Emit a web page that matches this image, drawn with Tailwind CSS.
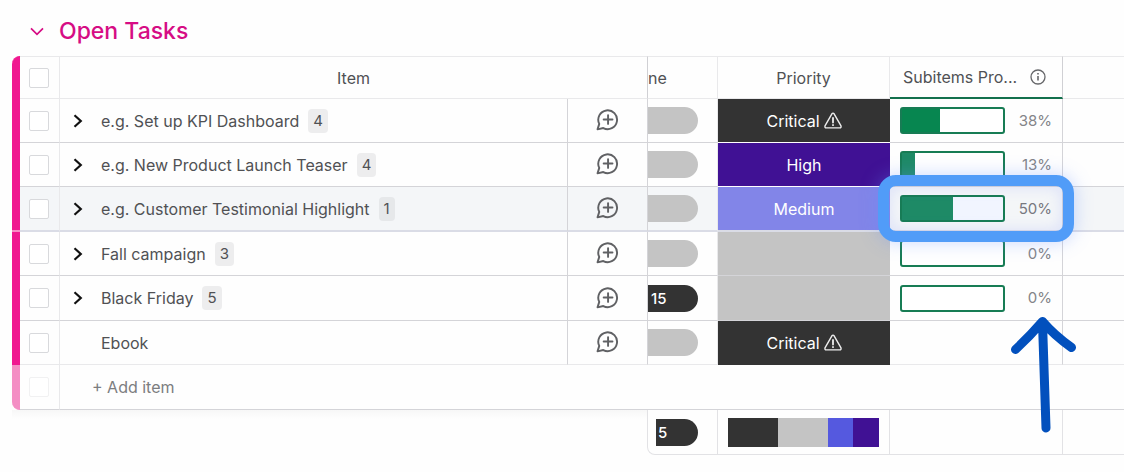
<!DOCTYPE html>
<html lang="en">
<head>
<meta charset="utf-8">
<title>Open Tasks</title>
<script src="https://cdn.jsdelivr.net/npm/@tailwindcss/browser@4"></script>
</head>
<body class="bg-[#fefefe] text-[#505154] text-base leading-6 font-['Inter',sans-serif] overflow-x-hidden">
<svg class="hidden">
  <symbol id="chat" viewBox="0 0 24 24" fill="none" stroke="#606164" stroke-width="2" stroke-linecap="round" stroke-linejoin="round">
    <path d="M1.6 22.3 L3.4 16.6 A9.8 9.8 0 1 1 7.6 20.9 Z"/><path d="M12.6 7.4v9.2M8 12h9.2"/>
  </symbol>
  <symbol id="chev" viewBox="0 0 10 14" fill="none" stroke="#111" stroke-width="2.2"><path d="M1.500 1.200 L7.800 7 L1.500 12.800"/></symbol>
  <symbol id="warn" viewBox="0 0 18 17" fill="none" stroke="#eee" stroke-width="1.4" stroke-linecap="round" stroke-linejoin="round">
    <path d="M7.900 1.800 Q9 .4 10.100 1.800 L17 13.800 Q17.400 15.800 15.800 15.900 H2.200 Q.6 15.800 1 13.800 Z"/><path d="M9 6v4.600M9 13v.2" stroke-width="1.8"/>
  </symbol>
</svg>
<h1 class="flex items-center gap-[15px] h-[56px] pt-[6px] pl-[30px] text-[#d60c84]">
  <button aria-label="Collapse group"><svg class="w-[14px] h-[9px]" viewBox="0 0 14 9" fill="none" stroke="currentColor" stroke-width="1.7"><path d="M1 1.300 L7 7.300 L13 1.300"/></svg></button>
  <span class="text-[23px] leading-7 font-medium">Open Tasks</span>
</h1>
<main class="pl-3">
<table class="w-full table-fixed border-separate border-spacing-0 [&_td]:p-0 [&_th]:p-0 [&_th]:font-normal">
  <colgroup><col class="w-[8px]"><col class="w-[40px]"><col><col class="w-[80px]"><col class="w-[71px]"><col class="w-[172px]"><col class="w-[173px]"><col class="w-[61px]"></colgroup>
  <thead>
    <tr class="h-[43px] [&>th]:border-t [&>th]:border-[#e9e9eb]">
      <th class="bg-[#f01890] rounded-tl-lg border-t-[#f01890]!"></th>
      <th class="border-r border-b"><input type="checkbox" aria-label="Select all" class="block ml-[9px] appearance-none size-5 border border-[#d8d9dc] rounded-xs bg-white"></th>
      <th class="border-b" colspan="2">Item</th>
      <th class="border-b border-l border-l-[#d0d0d4]! border-r text-left">ne</th>
      <th class="border-b border-r">Priority</th>
      <th class="border-b-2 border-b-[#13704d]! border-r border-r-[#d0d0d4]!"><div class="flex items-center justify-between pl-[13px] pr-4"><span>Subitems Pro...</span>
        <button aria-label="Column info"><svg class="block size-4" viewBox="0 0 16 16" fill="none" stroke="#66676a" stroke-width="1.3"><circle cx="8" cy="8" r="7"/><path d="M8 7v4.500M8 4v1.500" stroke-width="1.6"/></svg></button></div></th>
      <th class="border-b"></th>
    </tr>
  </thead>
  <tbody class="[&_td]:border-[#d4d4d8]">
    <tr class="h-[44px] [&>td]:border-b">
      <td class="bg-[#f01890] border-[#f01890]!"></td>
      <td class="border-r border-r-[#e9e9eb]!"><input type="checkbox" aria-label="Select Set up KPI Dashboard" class="block ml-[9px] appearance-none size-5 border border-[#d8d9dc] rounded-xs bg-white"></td>
      <td><div class="flex items-center pl-[13px]"><button aria-label="Expand" class="w-[28px]"><svg class="w-[10px] h-[14px]"><use href="#chev"/></svg></button><span>e.g. Set up KPI Dashboard</span><span class="ml-[9px] px-[5px] rounded bg-[#ededee] text-[15px]">4</span></div></td>
      <td class="border-l"><button aria-label="Add update" class="block mx-auto pb-[2px]"><svg class="block size-[23px]"><use href="#chat"/></svg></button></td>
      <td class="border-l border-r border-r-[#e9e9eb]!"><div class="w-[50px] h-[27px] rounded-r-full bg-[#c4c4c4]"></div></td>
      <td class="bg-[#333] text-white border-b-white!"><div class="flex items-center justify-center gap-1"><span>Critical</span><svg class="w-[18px] h-[17px]"><use href="#warn"/></svg></div></td>
      <td class="border-r"><div class="flex items-center justify-between px-[10px]"><div class="w-[105px] h-[27px] border-2 border-[#177c54] rounded-[3px] bg-white"><div class="h-full bg-[#078650]" style="width:38%"></div></div><span class="text-[15px] text-[#838488]">38%</span></div></td>
      <td></td>
    </tr>
    <tr class="h-[44px] [&>td]:border-b">
      <td class="bg-[#f01890] border-[#f01890]!"></td>
      <td class="border-r border-r-[#e9e9eb]!"><input type="checkbox" aria-label="Select New Product Launch Teaser" class="block ml-[9px] appearance-none size-5 border border-[#d8d9dc] rounded-xs bg-white"></td>
      <td><div class="flex items-center pl-[13px]"><button aria-label="Expand" class="w-[28px]"><svg class="w-[10px] h-[14px]"><use href="#chev"/></svg></button><span>e.g. New Product Launch Teaser</span><span class="ml-[9px] px-[5px] rounded bg-[#ededee] text-[15px]">4</span></div></td>
      <td class="border-l"><button aria-label="Add update" class="block mx-auto pb-[2px]"><svg class="block size-[23px]"><use href="#chat"/></svg></button></td>
      <td class="border-l border-r border-r-[#e9e9eb]!"><div class="w-[50px] h-[27px] rounded-r-full bg-[#c4c4c4]"></div></td>
      <td class="bg-[#401194] text-white text-center border-b-white!">High</td>
      <td class="border-r"><div class="flex items-center justify-between px-[10px]"><div class="w-[105px] h-[27px] border-2 border-[#177c54] rounded-[3px] bg-white"><div class="h-full bg-[#1e8a66]" style="width:13%"></div></div><span class="text-[15px] text-[#838488]">13%</span></div></td>
      <td></td>
    </tr>
    <tr class="h-[45px] bg-[#f4f6f8] [&>td]:border-b-2 [&>td]:border-b-[#dadce6]">
      <td class="bg-[#f01890] border-b-[#f78cc5]!"></td>
      <td class="border-r border-r-[#e9e9eb]!"><input type="checkbox" aria-label="Select Customer Testimonial Highlight" class="block ml-[9px] appearance-none size-5 border border-[#d8d9dc] rounded-xs bg-white"></td>
      <td><div class="flex items-center pl-[13px]"><button aria-label="Expand" class="w-[28px]"><svg class="w-[10px] h-[14px]"><use href="#chev"/></svg></button><span>e.g. Customer Testimonial Highlight</span><span class="ml-[9px] px-[5px] rounded bg-[#e6e8ea] text-[15px]">1</span></div></td>
      <td class="border-l"><button aria-label="Add update" class="block mx-auto pb-[2px]"><svg class="block size-[23px]"><use href="#chat"/></svg></button></td>
      <td class="border-l border-r border-r-[#e9e9eb]!"><div class="w-[50px] h-[27px] rounded-r-full bg-[#c4c4c4]"></div></td>
      <td class="bg-[#8285e8] text-white text-center">Medium</td>
      <td class="relative border-r"><div class="absolute z-10 -top-3 -bottom-3 -left-3 -right-3 border-[11px] border-[#519cf8] rounded-[18px] shadow-[0_0_18px_rgba(100,140,255,0.35),inset_0_0_16px_rgba(110,130,255,0.2)]"></div>
        <div class="flex items-center justify-between px-[10px]"><div class="w-[105px] h-[27px] border-2 border-[#177c54] rounded-[3px] bg-[#f1f5ff]"><div class="h-full bg-[#1e8a66]" style="width:50%"></div></div><span class="text-[15px] text-[#77787f]">50%</span></div></td>
      <td></td>
    </tr>
    <tr class="h-[44px] [&>td]:border-b">
      <td class="bg-[#f01890] border-[#f01890]!"></td>
      <td class="border-r border-r-[#e9e9eb]!"><input type="checkbox" aria-label="Select Fall campaign" class="block ml-[9px] appearance-none size-5 border border-[#d8d9dc] rounded-xs bg-white"></td>
      <td><div class="flex items-center pl-[13px]"><button aria-label="Expand" class="w-[28px]"><svg class="w-[10px] h-[14px]"><use href="#chev"/></svg></button><span>Fall campaign</span><span class="ml-[9px] px-[5px] rounded bg-[#ededee] text-[15px]">3</span></div></td>
      <td class="border-l"><button aria-label="Add update" class="block mx-auto pb-[2px]"><svg class="block size-[23px]"><use href="#chat"/></svg></button></td>
      <td class="border-l border-r border-r-[#e9e9eb]!"><div class="w-[50px] h-[27px] rounded-r-full bg-[#c4c4c4]"></div></td>
      <td class="bg-[#c4c4c4]"></td>
      <td class="border-r"><div class="flex items-center justify-between px-[10px]"><div class="w-[105px] h-[27px] border-2 border-[#177c54] rounded-[3px] bg-white"></div><span class="text-[15px] text-[#838488]">0%</span></div></td>
      <td></td>
    </tr>
    <tr class="h-[45px] [&>td]:border-b">
      <td class="bg-[#f01890] border-[#f01890]!"></td>
      <td class="border-r border-r-[#e9e9eb]!"><input type="checkbox" aria-label="Select Black Friday" class="block ml-[9px] appearance-none size-5 border border-[#d8d9dc] rounded-xs bg-white"></td>
      <td><div class="flex items-center pl-[13px]"><button aria-label="Expand" class="w-[28px]"><svg class="w-[10px] h-[14px]"><use href="#chev"/></svg></button><span>Black Friday</span><span class="ml-[9px] px-[5px] rounded bg-[#ededee] text-[15px]">5</span></div></td>
      <td class="border-l"><button aria-label="Add update" class="block mx-auto pb-[2px]"><svg class="block size-[23px]"><use href="#chat"/></svg></button></td>
      <td class="border-l border-r border-r-[#e9e9eb]!"><div class="w-[50px] h-[27px] rounded-r-full bg-[#333] text-white text-[15px] font-medium leading-[27px] pl-[3px]">15</div></td>
      <td class="bg-[#c4c4c4]"></td>
      <td class="border-r"><div class="flex items-center justify-between px-[10px]"><div class="w-[105px] h-[27px] border-2 border-[#177c54] rounded-[3px] bg-white"></div><span class="text-[15px] text-[#838488]">0%</span></div></td>
      <td></td>
    </tr>
    <tr class="h-[44px] [&>td]:border-b [&>td]:border-b-[#e9e9eb]">
      <td class="bg-[#f01890] border-[#f01890]!"></td>
      <td class="border-r border-r-[#e9e9eb]!"><input type="checkbox" aria-label="Select Ebook" class="block ml-[9px] appearance-none size-5 border border-[#d8d9dc] rounded-xs bg-white"></td>
      <td><div class="pl-[41px]">Ebook</div></td>
      <td class="border-l"><button aria-label="Add update" class="block mx-auto pb-[2px]"><svg class="block size-[23px]"><use href="#chat"/></svg></button></td>
      <td class="border-l border-r border-r-[#e9e9eb]!"><div class="w-[50px] h-[27px] rounded-r-full bg-[#c4c4c4]"></div></td>
      <td class="bg-[#333] text-white border-b-[#333]!"><div class="flex items-center justify-center gap-1"><span>Critical</span><svg class="w-[18px] h-[17px]"><use href="#warn"/></svg></div></td>
      <td class="relative border-r"><svg class="absolute z-10 -top-2 left-[119px] w-[70px] h-[122px]" viewBox="0 0 70 122" fill="none" stroke="#0250bd" stroke-width="9" stroke-linecap="round" stroke-linejoin="round"><path d="M6.500 36.500 Q20 24 33.500 8.500 Q45 22 62.500 34.500 M33.500 10 L37 115"/></svg></td>
      <td></td>
    </tr>
    <tr class="h-[45px] [&>td]:border-b">
      <td class="bg-[#f48ec4] rounded-bl-lg border-[#f48ec4]!"></td>
      <td class="border-r border-r-[#e9e9eb]!"><input type="checkbox" disabled aria-label="Select new item" class="block ml-[9px] appearance-none size-5 border border-[#f1f1f2] rounded-xs bg-white"></td>
      <td colspan="6"><button class="block ml-[32px] text-[#7c7d80]">+ Add item</button></td>
    </tr>
  </tbody>
  <tfoot>
    <tr class="h-[45px]">
      <td colspan="4" class="bg-linear-to-b from-[#f7f7f7] from-0% to-[#fefefe] to-20%"></td>
      <td class="border-l border-b border-r border-[#e2e2e5] rounded-bl-lg"><div class="ml-2 w-[42px] h-[27px] rounded-r-full bg-[#333] text-white text-[15px] font-medium leading-[27px] pl-[2px]">5</div></td>
      <td class="border-b border-r border-[#e2e2e5]"><div class="flex h-[29px] mx-[10px]"><div class="bg-[#333]" style="width:33%"></div><div class="bg-[#c4c4c4]" style="width:33%"></div><div class="bg-[#5559df]" style="width:17%"></div><div class="bg-[#401194]" style="width:17%"></div></div></td>
      <td class="border-b border-r border-[#e2e2e5]"></td>
      <td class="border-b border-[#e2e2e5]"></td>
    </tr>
  </tfoot>
</table>
</main>
</body>
</html>
